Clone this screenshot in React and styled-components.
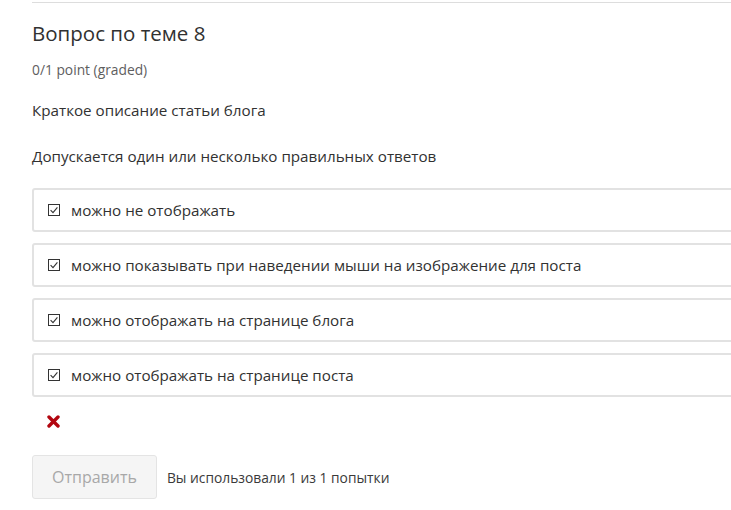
import React from "react";
import styled, { createGlobalStyle } from "styled-components";

const GlobalStyle = createGlobalStyle`
  html, body {
    margin: 0;
    padding: 0;
    background: #fff;
    overflow: hidden;
  }
  body {
    font-family: "Open Sans", "Liberation Sans", sans-serif;
    color: #313131;
  }
`;

// problem block
const Problem = styled.div`
  margin: 2px 0 0 32px;
  width: 740px;
  border-top: 1px solid #ddd;
`;

const Title = styled.h3`
  margin: 16px 0 0;
  font-size: 20.5px;
  font-weight: 400;
  line-height: 28px;
  color: #313131;
`;

const Points = styled.div`
  margin-top: 15px;
  font-size: 13.8px;
  line-height: 16px;
  color: #5e5e5e;
`;

const Text = styled.p`
  margin: ${(p) => p.$top}px 0 0;
  font-size: 15.2px;
  line-height: 20px;
`;

const Choices = styled.div`
  display: flex;
  flex-direction: column;
  gap: 11px;
  margin-top: 22px;
`;

const Choice = styled.label`
  display: flex;
  align-items: center;
  gap: 11px;
  height: 40px;
  padding: 0 14px;
  border: 2px solid #e2e2e2;
  border-radius: 3px;
  font-size: 15.2px;
  color: #313131;
`;

const Box = styled.span`
  display: inline-flex;
  flex: none;
  width: 12px;
  height: 12px;
`;

const Status = styled.div`
  display: flex;
  padding: 18px 0 0 15px;
  height: 13px;
`;

const Actions = styled.div`
  display: flex;
  align-items: center;
  gap: 10px;
  margin-top: 27px;
`;

const Submit = styled.button`
  height: 44px;
  padding: 0 19px;
  border: 1px solid #e4e4e4;
  border-radius: 3px;
  background: #f5f5f5;
  color: #a8a8a8;
  font-family: "Open Sans", "Liberation Sans", sans-serif;
  font-size: 16px;
`;

const Attempts = styled.span`
  font-size: 13.8px;
  color: #3a3a3a;
`;

const choices = [
  "можно не отображать",
  "можно показывать при наведении мыши на изображение для поста",
  "можно отображать на странице блога",
  "можно отображать на странице поста",
];

const CheckIcon = () => (
  <svg width="12" height="12" viewBox="0 0 12 12">
    <rect x="0.5" y="0.5" width="11" height="11" fill="#fff" stroke="#333" />
    <path d="M2.6 6.2 L5 8.6 L9.4 3.4" fill="none" stroke="#333" strokeWidth="1.1" />
  </svg>
);

const Cross = () => (
  <svg width="13" height="13" viewBox="0 0 13 13">
    <path d="M2 2 L11 11 M11 2 L2 11" stroke="#b20610" strokeWidth="3.4" strokeLinecap="round" />
  </svg>
);

const App = () => {
  return (
    <>
      <GlobalStyle />
      <Problem>
        <Title>Вопрос по теме 8</Title>
        <Points>0/1 point (graded)</Points>
        <Text $top={22}>Краткое описание статьи блога</Text>
        <Text $top={26}>Допускается один или несколько правильных ответов</Text>
        <Choices>
          {choices.map((c) => (
            <Choice key={c}>
              <Box>
                <CheckIcon />
              </Box>
              {c}
            </Choice>
          ))}
        </Choices>
        <Status>
          <Cross />
        </Status>
        <Actions>
          <Submit disabled>Отправить</Submit>
          <Attempts>Вы использовали 1 из 1 попытки</Attempts>
        </Actions>
      </Problem>
    </>
  );
};

export default App;
